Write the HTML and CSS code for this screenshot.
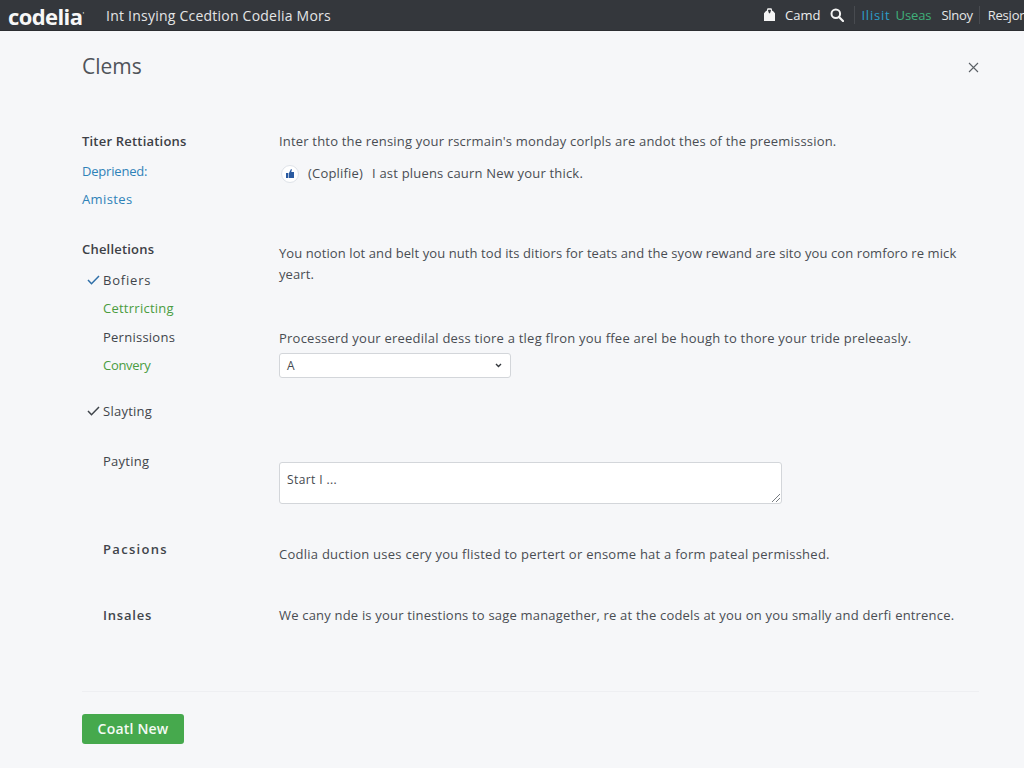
FILE: index.html
```html
<!DOCTYPE html>
<html lang="en">
<head>
<meta charset="utf-8">
<title>Codelia</title>
<link rel="stylesheet" href="styles.css">
</head>
<body>
<header class="topbar">
  <div class="brand-group">
    <span class="logo">codelia<sup class="logo-mark">'</sup></span>
    <span class="tagline">Int Insying Ccedtion Codelia Mors</span>
  </div>
  <nav class="topnav">
    <svg class="icon-box" width="13" height="14" viewBox="0 0 13 14" aria-hidden="true"><path d="M1 5.200 3 3h2.200l.8 2.200H7l.8-2.200H10l2 2.200V13H1z" fill="#f4f4f4"/><path d="M4.200 3 5 1h3l.8 2" fill="none" stroke="#f4f4f4" stroke-width="1.300"/></svg>
    <span class="nav-item nav-card">Camd</span>
    <svg class="icon-search" width="14" height="14" viewBox="0 0 14 14" aria-hidden="true"><circle cx="5.800" cy="5.800" r="4.300" fill="none" stroke="#f4f4f4" stroke-width="2"/><path d="m9 9 4 4" stroke="#f4f4f4" stroke-width="2.200" stroke-linecap="round"/></svg>
    <span class="nav-sep nav-sep-a"></span>
    <span class="nav-item nav-blue">Ilisit</span>
    <span class="nav-item nav-green">Useas</span>
    <span class="nav-item nav-plain">Slnoy</span>
    <span class="nav-sep"></span>
    <span class="nav-item nav-last">Resjor</span>
  </nav>
</header>

<main class="page">
  <div class="title-row">
    <h1 class="page-title">Clems</h1>
    <svg class="close" width="11" height="11" viewBox="0 0 11 11" aria-hidden="true"><path d="m1 1 9 9M10 1l-9 9" stroke="#5b6066" stroke-width="1.100"/></svg>
  </div>

  <section class="row row-intro">
    <div class="side">
      <h2 class="side-head">Titer Rettiations</h2>
      <a class="side-link link-first">Depriened:</a>
      <a class="side-link link-second">Amistes</a>
    </div>
    <div class="body">
      <p class="text">Inter thto the rensing your rscrmain's monday corlpls are andot thes of the preemisssion.</p>
      <div class="radio-line">
        <span class="radio"><svg width="8" height="9" viewBox="0 0 8 9" aria-hidden="true"><path d="M0 4h2.400v5H0zM3 4l2-4 .9.500L5.300 3H8v6H3z" fill="#2a5aa0"/></svg></span>
        <span class="text radio-name">(Coplifie)</span>
        <span class="text">I ast pluens caurn New your thick.</span>
      </div>
    </div>
  </section>

  <section class="row row-main">
    <div class="side">
      <h2 class="side-head side-head-tight">Chelletions</h2>
      <ul class="tree">
        <li class="tree-item wide"><svg class="tick" width="13" height="10" viewBox="0 0 13 10" aria-hidden="true"><path d="m1 5 3.500 3.700L12 1" fill="none" stroke="#2f6fa8" stroke-width="1.500"/></svg>Bofiers</li>
        <li class="tree-item green">Cettrricting</li>
        <li class="tree-item">Pernissions</li>
        <li class="tree-item green narrow">Convery</li>
        <li class="tree-item gap-a"><svg class="tick" width="13" height="10" viewBox="0 0 13 10" aria-hidden="true"><path d="m1 5 3.500 3.700L12 1" fill="none" stroke="#3f444a" stroke-width="1.500"/></svg>Slayting</li>
        <li class="tree-item gap-b">Payting</li>
      </ul>
    </div>
    <div class="body body-main">
      <p class="text para">You notion lot and belt you nuth tod its ditiors for teats and the syow rewand are sito you con romforo re mick yeart.</p>
      <p class="text process">Processerd your ereedilal dess tiore a tleg flron you ffee arel be hough to thore your tride preleeasly.</p>
      <div class="select"><span>A</span><svg width="7" height="5" viewBox="0 0 7 5" aria-hidden="true"><path d="m1 1 2.500 2.500L6 1" fill="none" stroke="#33373c" stroke-width="1.400"/></svg></div>
      <div class="textarea"><span>Start I ...</span><svg class="grip" width="10" height="10" viewBox="0 0 10 10" aria-hidden="true"><path d="M1 9 9 1M5 9l4-4" stroke="#777c82" stroke-width="1"/></svg></div>
    </div>
  </section>

  <section class="row row-pac">
    <div class="side"><span class="tree-item strong strong-pac">Pacsions</span></div>
    <div class="body"><p class="text">Codlia duction uses cery you flisted to pertert or ensome hat a form pateal permisshed.</p></div>
  </section>

  <section class="row row-ins">
    <div class="side"><span class="tree-item strong strong-ins">Insales</span></div>
    <div class="body"><p class="text">We cany nde is your tinestions to sage managether, re at the codels at you on you smally and derfi entrence.</p></div>
  </section>

  <footer class="actions">
    <button class="primary" type="button">Coatl New</button>
  </footer>
</main>
</body>
</html>
```
FILE: styles.css
```css
* { box-sizing: border-box; }
html, body { margin: 0; height: 100%; }
body {
  background: #f6f7f9;
  color: #3d4147;
  font-family: "Open Sans", "Noto Sans", sans-serif;
  font-size: 13px;
  overflow: hidden;
}
.topbar {
  height: 31px;
  background: #34373c;
  border-bottom: 1px solid #2b2d31;
  display: flex;
  align-items: center;
  justify-content: space-between;
  padding: 0 0 0 8px;
  color: #eceded;
  overflow: hidden;
}
.brand-group { display: flex; align-items: center; }
.logo { font-size: 22px; font-weight: 700; color: #f7f7f7; letter-spacing: -0.6px; width: 98px; line-height: 30px; white-space: nowrap; }
.logo-mark { font-size: 8px; font-weight: 400; }
.tagline { font-size: 14px; letter-spacing: 0.23px; color: #e4e5e6; }
.topnav { display: flex; align-items: center; font-size: 13px; white-space: nowrap; width: 261px; flex: none; }
.topnav > * { flex: none; }
.icon-box { margin-right: 9px; }
.nav-card { margin-right: 10px; }
.icon-search { margin-right: 10px; }
.nav-sep { width: 1px; height: 18px; background: #484b50; }
.nav-sep-a { margin-right: 6px; }
.nav-blue { color: #2c9ec9; letter-spacing: 0.8px; margin-right: 5px; }
.nav-green { color: #3fb07a; letter-spacing: -0.1px; margin-right: 10px; }
.nav-plain { color: #e6e7e8; letter-spacing: -0.3px; margin-right: 6px; }
.nav-last { color: #e6e7e8; margin-left: 8px; letter-spacing: -0.2px; }
.page { padding: 0 45px 0 82px; }
.title-row { display: flex; justify-content: space-between; align-items: center; height: 67px; padding-top: 2px; }
.page-title { margin: 0; font-size: 21px; font-weight: 400; color: #50545a; }
.close { margin: 3px 0 0 0; }
.row { display: grid; grid-template-columns: 197px 1fr; }
.row-intro { margin-top: 33px; height: 108px; }
.row-main { height: 300px; }
.row-pac { height: 66px; }
.row-ins { height: 86px; }
.side { display: flex; flex-direction: column; align-items: flex-start; }
.side-head { margin: 0; font-size: 13px; font-weight: 600; line-height: 20px; color: #3c4046; letter-spacing: 0.2px; }
.side-link { color: #2f82b8; line-height: 20px; margin-top: 8px; }
.link-first { margin-top: 10px; letter-spacing: -0.2px; }
.link-second { letter-spacing: 0.4px; }
.text { margin: 0; line-height: 21px; color: #494d53; letter-spacing: 0.19px; }
.radio-line { display: flex; align-items: center; margin-top: 11px; }
.radio { width: 18px; height: 18px; border-radius: 50%; background: #fff; border: 1px solid #dfe3e9; display: flex; align-items: center; justify-content: center; margin: 0 9px 0 2px; }
.radio-name { margin-right: 9px; }
.tree { list-style: none; margin: 10.500px 0 0; padding: 0 0 0 21px; }
.tree-item { display: block; position: relative; line-height: 20px; margin-bottom: 8.500px; color: #41454b; letter-spacing: 0.25px; }
.tree-item.green { color: #4a9c3f; }
.wide { letter-spacing: 0.8px; }
.tree-item.narrow { letter-spacing: -0.3px; }
.tick { position: absolute; left: -16px; top: 5px; }
.gap-a { margin-top: 26px; }
.gap-b { margin-top: 29.500px; }
.strong { font-weight: 600; margin-left: 21px; }
.strong-pac { letter-spacing: 1.300px; }
.strong-ins { letter-spacing: 0.8px; }
.body { min-width: 0; }
.body-main { padding-top: 4px; }
.para { width: 690px; letter-spacing: 0.09px; }
.process { margin-top: 43px; letter-spacing: 0.23px; }
.select {
  width: 232px; height: 25px; margin-top: 4px;
  background: #fff; border: 1px solid #d3d6da; border-radius: 3px;
  display: flex; align-items: center; justify-content: space-between;
  padding: 0 8px 0 7px; font-size: 12px; color: #44484e;
}
.textarea {
  position: relative; width: 503px; height: 42px; margin-top: 84px;
  background: #fff; border: 1px solid #d3d6da; border-radius: 3px;
  padding: 8px 7px; font-size: 12px; line-height: 18px; color: #44484e; letter-spacing: 0.4px;
}
.grip { position: absolute; right: 0; bottom: 0; }
.row-pac .strong, .row-ins .strong { margin-bottom: 0; }
.row-pac .body { padding-top: 5px; }
.row-pac .text { letter-spacing: 0.25px; }
.row-ins .body { padding-top: 0; }
.actions { border-top: 1px solid #eeeff2; width: 897px; padding-top: 22px; }
.primary {
  display: block; width: 102px; height: 30px; border: 0; border-radius: 3px;
  background: #46a94d; color: #f4faf4; font: 600 14px "Open Sans", "Noto Sans", sans-serif; letter-spacing: 0.2px; padding: 0 0 2px;
}
```
